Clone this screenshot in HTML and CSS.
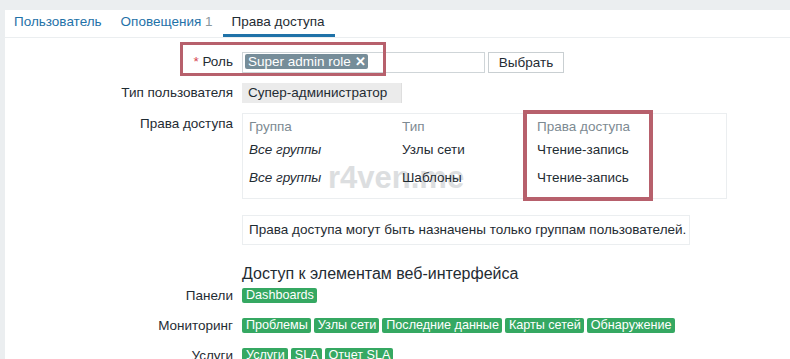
FILE: index.html
```html
<!DOCTYPE html>
<html lang="ru">
<head>
    <meta charset="UTF-8">
    <meta name="viewport" content="width=device-width, initial-scale=1.0">
    <title>Права доступа</title>
    <link rel="stylesheet" href="styles.css">
</head>
<body>
    <div class="page">
        <div class="panel">
            <div class="tabs">
                <a class="tab">Пользователь</a>
                <a class="tab">Оповещения <span class="count">1</span></a>
                <a class="tab active">Права доступа</a>
            </div>

            <div class="form">
                <div class="row row-role">
                    <label class="label"><span class="req">*</span> Роль</label>
                    <div class="field">
                        <div class="multiselect">
                            <span class="chip">Super admin role <span class="chip-x">&#x2715;</span></span>
                        </div>
                        <button class="btn">Выбрать</button>
                    </div>
                    <div class="mark mark-role"></div>
                </div>

                <div class="row">
                    <label class="label">Тип пользователя</label>
                    <div class="field">
                        <span class="readonly">Супер-администратор</span>
                    </div>
                </div>

                <div class="row">
                    <label class="label label-top">Права доступа</label>
                    <div class="field">
                        <div class="perm-box">
                            <div class="watermark">r4ven.me</div>
                            <div class="perm-grid">
                                <span class="th">Группа</span>
                                <span class="th">Тип</span>
                                <span class="th">Права доступа</span>
                                <span class="td"><i>Все группы</i></span>
                                <span class="td">Узлы сети</span>
                                <span class="td">Чтение-запись</span>
                                <span class="td"><i>Все группы</i></span>
                                <span class="td">Шаблоны</span>
                                <span class="td">Чтение-запись</span>
                            </div>
                            <div class="mark mark-perm"></div>
                        </div>
                    </div>
                </div>

                <div class="row row-info">
                    <span class="label"></span>
                    <div class="field">
                        <div class="info">Права доступа могут быть назначены только группам пользователей.</div>
                    </div>
                </div>

                <div class="row row-head">
                    <span class="label"></span>
                    <h3 class="section-title">Доступ к элементам веб-интерфейса</h3>
                </div>

                <div class="row row-tags">
                    <label class="label">Панели</label>
                    <div class="tags">
                        <span class="tag">Dashboards</span>
                    </div>
                </div>

                <div class="row row-tags">
                    <label class="label">Мониторинг</label>
                    <div class="tags">
                        <span class="tag">Проблемы</span>
                        <span class="tag">Узлы сети</span>
                        <span class="tag">Последние данные</span>
                        <span class="tag">Карты сетей</span>
                        <span class="tag">Обнаружение</span>
                    </div>
                </div>

                <div class="row row-tags">
                    <label class="label">Услуги</label>
                    <div class="tags">
                        <span class="tag">Услуги</span>
                        <span class="tag">SLA</span>
                        <span class="tag">Отчет SLA</span>
                    </div>
                </div>
            </div>
        </div>
    </div>
</body>
</html>
```

FILE: styles.css
```css
body {
    margin: 0;
    background: #ebeef0;
    font-family: "Liberation Sans", Arial, sans-serif;
    font-size: 13.5px;
    color: #1f2c33;
    overflow: hidden;
}
.page {
    padding: 10px 0 0 5px;
}
.panel {
    background: #fff;
    height: 400px;
}
.tabs {
    display: flex;
    height: 27px;
    border-bottom: 1px solid #ebeef0;
}
.tab {
    display: block;
    padding: 4px 10px 0 9px;
    line-height: 16px;
    color: #1f72a8;
    cursor: pointer;
}
.tab .count {
    color: #8c979d;
}
.tab.active {
    color: #1f2c33;
    border-bottom: 3px solid #1f72a8;
    height: 20px;
}
.form {
    padding-top: 14px;
}
.row {
    position: relative;
    display: grid;
    grid-template-columns: 228px 1fr;
    column-gap: 9px;
    margin-bottom: 10px;
}
.label {
    text-align: right;
    line-height: 20px;
}
.label-top {
    line-height: 22px;
}
.req {
    color: #d6464f;
}
.field {
    display: flex;
    align-items: flex-start;
    gap: 3px;
}
.multiselect {
    box-sizing: border-box;
    width: 243px;
    height: 21px;
    border: 1px solid #cfd5d8;
    padding: 1px 2px;
}
.chip {
    display: inline-block;
    background: #768d99;
    color: #fff;
    line-height: 15px;
    padding: 0 2px 0 3px;
    border-radius: 2px;
}
.chip-x {
    font-weight: bold;
    font-size: 13px;
}
.btn {
    box-sizing: border-box;
    height: 21px;
    width: 76px;
    border: 1px solid #c9cfd2;
    background: #fff;
    font: inherit;
    color: #1f2c33;
    padding: 0;
}
.readonly {
    display: block;
    width: 160px;
    height: 20px;
    line-height: 20px;
    padding-left: 6px;
    box-sizing: border-box;
    background: #ebebeb;
    border-right: 1px solid #dedede;
}
.perm-box {
    position: relative;
    box-sizing: border-box;
    width: 485px;
    height: 86px;
    border: 1px solid #ebeef0;
    padding: 3px 6px;
}
.perm-grid {
    position: relative;
    display: grid;
    grid-template-columns: 153px 135px 1fr;
    grid-template-rows: 20px 28px 28px;
}
.perm-grid .th {
    color: #7d8a92;
    line-height: 20px;
}
.perm-grid .td {
    line-height: 20px;
    padding-top: 3px;
}
.watermark {
    position: absolute;
    left: 85px;
    top: 46px;
    font-size: 31px;
    font-weight: bold;
    color: #dcdee0;
}
.mark {
    position: absolute;
    border: 3px solid #b7606c;
    pointer-events: none;
}
.mark-role {
    left: 175px;
    top: -10px;
    width: 200px;
    height: 28px;
}
.mark-perm {
    left: 280px;
    top: -4px;
    width: 122px;
    height: 83px;
    border-width: 4px;
}
.row-info {
    margin-top: 16px;
}
.info {
    box-sizing: border-box;
    width: 448px;
    height: 30px;
    line-height: 28px;
    padding-left: 6px;
    border: 1px solid #ebeef0;
}
.row-head {
    margin-top: 17px;
    margin-bottom: 2px;
}
.section-title {
    margin: 0;
    font-size: 16px;
    font-weight: normal;
    line-height: 24px;
}
.row-tags {
    margin-bottom: 15px;
}
.row-tags .label {
    line-height: 15px;
}
.tags {
    display: flex;
    gap: 3px;
}
.tag {
    background: #35a862;
    color: #fff;
    font-size: 12.6px;
    line-height: 15px;
    padding: 0 3px 0 4px;
    border-radius: 2px;
}
```
